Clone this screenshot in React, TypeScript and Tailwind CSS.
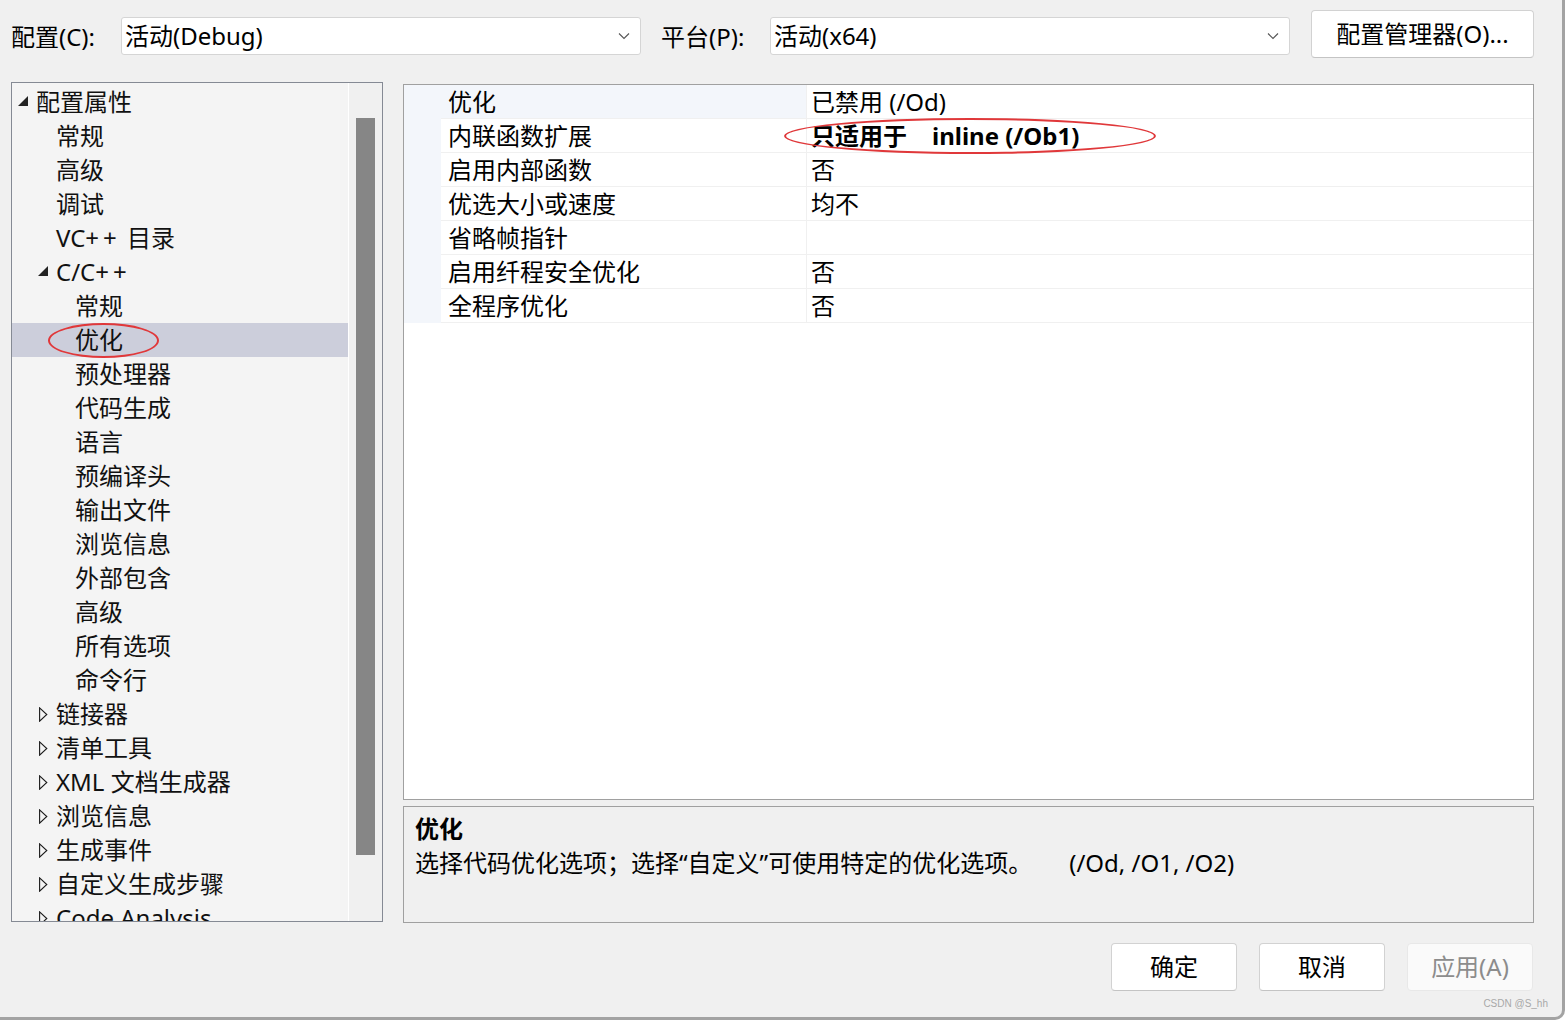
import React from "react";

const FONT = "[font-family:'Noto_Sans','Noto_Sans_CJK_SC',sans-serif]";

type TreeItem = { label: React.ReactNode; level: 0 | 1 | 2; tri?: "open" | "closed"; selected?: boolean };

const tree: TreeItem[] = [
  { label: "配置属性", level: 0, tri: "open" },
  { label: "常规", level: 1 },
  { label: "高级", level: 1 },
  { label: "调试", level: 1 },
  {
    label: (
      <>
        VC<span className="tracking-[4px]">++</span> 目录
      </>
    ),
    level: 1,
  },
  {
    label: (
      <>
        C/C<span className="tracking-[4px]">++</span>
      </>
    ),
    level: 1,
    tri: "open",
  },
  { label: "常规", level: 2 },
  { label: "优化", level: 2, selected: true },
  { label: "预处理器", level: 2 },
  { label: "代码生成", level: 2 },
  { label: "语言", level: 2 },
  { label: "预编译头", level: 2 },
  { label: "输出文件", level: 2 },
  { label: "浏览信息", level: 2 },
  { label: "外部包含", level: 2 },
  { label: "高级", level: 2 },
  { label: "所有选项", level: 2 },
  { label: "命令行", level: 2 },
  { label: "链接器", level: 1, tri: "closed" },
  { label: "清单工具", level: 1, tri: "closed" },
  { label: "XML 文档生成器", level: 1, tri: "closed" },
  { label: "浏览信息", level: 1, tri: "closed" },
  { label: "生成事件", level: 1, tri: "closed" },
  { label: "自定义生成步骤", level: 1, tri: "closed" },
  { label: "Code Analysis", level: 1, tri: "closed" },
];

const props: { name: string; value: string; bold?: boolean }[] = [
  { name: "优化", value: "已禁用 (/Od)" },
  { name: "内联函数扩展", value: "只适用于    inline (/Ob1)", bold: true },
  { name: "启用内部函数", value: "否" },
  { name: "优选大小或速度", value: "均不" },
  { name: "省略帧指针", value: "" },
  { name: "启用纤程安全优化", value: "否" },
  { name: "全程序优化", value: "否" },
];

function Chevron() {
  return (
    <svg width="12" height="8" viewBox="0 0 12 8" className="shrink-0">
      <polyline points="1,1.5 6,6.5 11,1.5" fill="none" stroke="#555" strokeWidth="1.1" />
    </svg>
  );
}

function Combo({ text, w }: { text: string; w: string }) {
  return (
    <div className={`${w} h-[38px] mt-[7px] bg-white border border-[#d5d5d5] rounded-[3px] flex items-center pl-[3px] pr-[10px]`}>
      <span className="flex-1 leading-[38px] text-[24px] text-black whitespace-nowrap">{text}</span>
      <Chevron />
    </div>
  );
}

function Tri({ kind }: { kind?: "open" | "closed" }) {
  if (kind === "open") {
    return (
      <svg width="10" height="10" viewBox="0 0 10 10" className="mb-[2px]">
        <polygon points="10,0 10,10 0,10" fill="#222" />
      </svg>
    );
  }
  if (kind === "closed") {
    return (
      <svg width="9" height="15" viewBox="0 0 9 15" className="ml-[1px]">
        <polygon points="0.6,0.8 7.8,7.5 0.6,14.2" fill="none" stroke="#1a1a1a" strokeWidth="1.1" />
      </svg>
    );
  }
  return null;
}

function Button({ children, disabled }: { children: React.ReactNode; disabled?: boolean }) {
  return (
    <div
      className={`w-[126px] h-[48px] rounded-[4px] flex items-center justify-center text-[24px] ${
        disabled
          ? "bg-[#fafafa] border border-[#e8e8e8] text-[#8c8c8c]"
          : "bg-white border border-[#d2d2d2] border-b-[#c4c4c4] text-black"
      }`}
    >
      {children}
    </div>
  );
}

export default function App() {
  const indent = { 0: "pl-[6px]", 1: "pl-[26px]", 2: "pl-[45px]" } as const;
  return (
    <div
      className={`${FONT} relative w-[1565px] h-[1020px] overflow-hidden bg-[#f0f0f0] text-black border-r-[3px] border-b-[3px] border-[#a3a3a3] rounded-br-[10px]`}
    >
      {/* top bar */}
      <div className="flex items-start pl-[11px] pt-[10px] h-[58px]">
        <div className="w-[110px] h-[54px] flex items-center text-[24px] whitespace-nowrap">配置(C):</div>
        <Combo text="活动(Debug)" w="w-[520px]" />
        <div className="ml-[20px] w-[109px] h-[54px] flex items-center text-[24px] whitespace-nowrap">平台(P):</div>
        <Combo text="活动(x64)" w="w-[520px]" />
        <div className="ml-[21px] w-[223px] h-[48px] bg-white border border-[#d2d2d2] border-b-[#c4c4c4] rounded-[4px] flex items-center justify-center text-[24px] whitespace-nowrap">
          配置管理器(O)...
        </div>
      </div>

      {/* main */}
      <div className="flex mt-[24px] pl-[11px]">
        {/* tree */}
        <div className="w-[372px] h-[840px] border border-[#858a94] flex">
          <div className="flex-1 bg-[#f4f4f4] border-r border-white overflow-hidden pt-[2px]">
            {tree.map((t, i) => (
              <div
                key={i}
                className={`h-[34px] flex items-center ${indent[t.level]} ${t.selected ? "bg-[#cccedb]" : ""}`}
              >
                <div className="w-[18px] shrink-0 flex items-center">
                  <Tri kind={t.tri} />
                </div>
                <span className="text-[24px] leading-[34px] whitespace-pre text-[#111]">{t.label}</span>
              </div>
            ))}
          </div>
          <div className="w-[33px] bg-[#f0f0f0] pt-[35px] pl-[7px]">
            <div className="w-[19px] h-[737px] bg-[#868686]" />
          </div>
        </div>

        {/* right column */}
        <div className="ml-[20px] w-[1131px] mt-[2px] flex flex-col">
          <div className="h-[716px] border border-[#a0a0a0] bg-white">
            {props.map((p, i) => (
              <div key={i} className="h-[34px] flex">
                <div className="w-[37px] bg-[#f3f6fb]" />
                <div
                  className={`w-[365px] border-b border-[#f0f0f0] pl-[7px] text-[24px] leading-[34px] whitespace-nowrap ${
                    i === 0 ? "bg-[#f3f6fb]" : ""
                  }`}
                >
                  {p.name}
                </div>
                <div
                  className={`flex-1 border-l border-b border-[#f0f0f0] pl-[4px] text-[24px] leading-[34px] whitespace-pre ${
                    p.bold ? "font-bold" : ""
                  }`}
                >
                  {p.value}
                </div>
              </div>
            ))}
          </div>
          <div className="mt-[6px] h-[117px] border border-[#a0a0a0] bg-[#f0f0f0] px-[11px] pt-[5px]">
            <div className="text-[24px] leading-[34px] font-bold">优化</div>
            <div className="text-[24px] leading-[34px] whitespace-pre">
              选择代码优化选项；选择“自定义”可使用特定的优化选项。<span className="ml-[37px]">(/Od, /O1, /O2)</span>
            </div>
          </div>
          <div className="mt-[20px] flex justify-end gap-[22px] pr-[1px]">
            <Button>确定</Button>
            <Button>取消</Button>
            <Button disabled>应用(A)</Button>
          </div>
        </div>
      </div>

      {/* annotations */}
      <div className="absolute left-[48px] top-[323px] w-[111px] h-[35px] rounded-[50%] border-[2.5px] border-[#e0383a]" />
      <div className="absolute left-[784px] top-[118px] w-[372px] h-[36px] rounded-[50%] border-[2.5px] border-[#e0383a]" />

      <div className="absolute right-[14px] bottom-[6px] text-[10px] text-[#a8a8a8] [font-family:'Liberation_Sans',sans-serif]">
        CSDN @S_hh
      </div>
    </div>
  );
}
